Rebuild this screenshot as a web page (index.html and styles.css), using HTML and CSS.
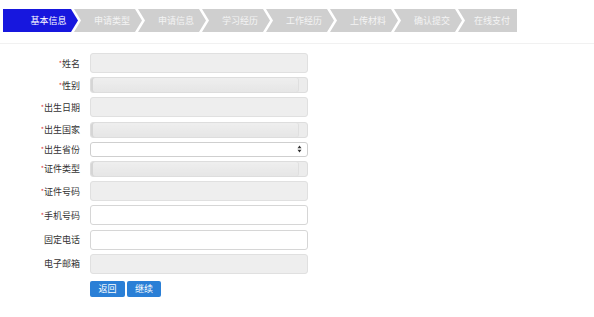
FILE: index.html
```html
<!DOCTYPE html>
<html lang="zh-CN">
<head>
    <meta charset="UTF-8">
    <meta name="viewport" content="width=device-width, initial-scale=1.0">
    <title>基本信息</title>
    <link rel="stylesheet" href="styles.css">
</head>
<body>
    <div class="steps-bar">
        <div class="steps">
            <div class="step first active">基本信息</div>
            <div class="step">申请类型</div>
            <div class="step">申请信息</div>
            <div class="step">学习经历</div>
            <div class="step">工作经历</div>
            <div class="step">上传材料</div>
            <div class="step">确认提交</div>
            <div class="step last">在线支付</div>
        </div>
    </div>

    <form class="info-form">
        <div class="form-row">
            <label class="req">姓名</label>
            <input type="text" class="field readonly" readonly>
        </div>
        <div class="form-row">
            <label class="req">性别</label>
            <select class="field sel disabled" disabled><option></option></select>
        </div>
        <div class="form-row">
            <label class="req">出生日期</label>
            <input type="text" class="field readonly" readonly>
        </div>
        <div class="form-row">
            <label class="req">出生国家</label>
            <select class="field sel disabled" disabled><option></option></select>
        </div>
        <div class="form-row">
            <label class="req">出生省份</label>
            <div class="sel-wrap">
                <select class="field sel open"><option></option></select>
                <svg class="sel-arrows" width="5" height="8" viewBox="0 0 5 8">
                    <path d="M0.5 3.2 L2.5 0.5 L4.5 3.2 Z M0.5 4.8 L2.5 7.5 L4.5 4.8 Z" fill="#333"/>
                </svg>
            </div>
        </div>
        <div class="form-row">
            <label class="req">证件类型</label>
            <select class="field sel disabled" disabled><option></option></select>
        </div>
        <div class="form-row">
            <label class="req">证件号码</label>
            <input type="text" class="field readonly" readonly>
        </div>
        <div class="form-row">
            <label class="req">手机号码</label>
            <input type="text" class="field">
        </div>
        <div class="form-row">
            <label>固定电话</label>
            <input type="text" class="field">
        </div>
        <div class="form-row">
            <label>电子邮箱</label>
            <input type="text" class="field readonly" readonly>
        </div>
        <div class="form-row buttons">
            <label></label>
            <div class="btn-group">
                <button type="button" class="btn">返回</button>
                <button type="button" class="btn">继续</button>
            </div>
        </div>
    </form>
</body>
</html>
```

FILE: styles.css
```css
body {
    margin: 0;
    padding: 0;
    background: #fff;
    color: #333;
    font-family: "Noto Sans CJK SC", "Noto Sans", sans-serif;
    font-size: 9px;
}
.steps-bar {
    padding: 9px 0 11px 3px;
    border-bottom: 1px solid #f1f1f1;
}
.steps {
    display: flex;
    height: 23px;
}
.step {
    width: 68px;
    margin-left: -4px;
    box-sizing: border-box;
    padding-left: 8px;
    background: #cfcfcf;
    color: #f4f4f4;
    display: flex;
    align-items: center;
    justify-content: center;
    clip-path: polygon(0 0, calc(100% - 7px) 0, 100% 50%, calc(100% - 7px) 100%, 0 100%, 7px 50%);
}
.step.first {
    width: 75px;
    margin-left: 0;
    padding-left: 16px;
    color: #fff;
    clip-path: polygon(0 0, calc(100% - 7px) 0, 100% 50%, calc(100% - 7px) 100%, 0 100%);
}
.step.last {
    width: 59px;
    padding-left: 9px;
    clip-path: polygon(0 0, 100% 0, 100% 100%, 0 100%, 7px 50%);
}
.step.active {
    background: #1717de;
}
.info-form {
    display: flex;
    flex-direction: column;
    gap: 4.2px;
    padding-top: 9px;
}
.form-row {
    display: flex;
    align-items: center;
}
.form-row label {
    width: 80px;
    text-align: right;
    margin-right: 10px;
    flex-shrink: 0;
}
.form-row label.req::before {
    content: "*";
    color: #d9363e;
    font-size: 7px;
    vertical-align: 1px;
}
.field {
    width: 218px;
    height: 20px;
    box-sizing: border-box;
    border: 1px solid #d6d6d6;
    border-radius: 3px;
    background: #fff;
    margin: 0;
    padding: 0 4px;
    font-family: inherit;
    font-size: 9px;
}
.field.readonly {
    background: #eeeeee;
    border-color: #e0e0e0;
}
.sel {
    -webkit-appearance: none;
    appearance: none;
    height: 16px;
}
.sel.disabled {
    background: linear-gradient(#e8e8e8, #dcdcdc);
    border-color: #d0d0d0;
    box-shadow: inset 2px 0 0 #c4c4c4, inset -8px 0 0 #e4e4e4, inset -9px 0 0 #d2d2d2;
}
.sel.open {
    height: 15px;
    border-color: #cfcfcf;
    background: #fff;
}
.sel-wrap {
    position: relative;
    width: 218px;
    height: 15px;
}
.sel-arrows {
    position: absolute;
    right: 6px;
    top: 3.5px;
}
.buttons {
    margin-top: 3px;
}
.btn-group {
    display: flex;
    gap: 2px;
}
.btn {
    height: 16px;
    width: 35px;
    border: none;
    border-radius: 2px;
    background: #2a7fd6;
    color: #fff;
    font-family: inherit;
    font-size: 9px;
    padding: 0;
}
.btn + .btn {
    width: 34px;
}
```
